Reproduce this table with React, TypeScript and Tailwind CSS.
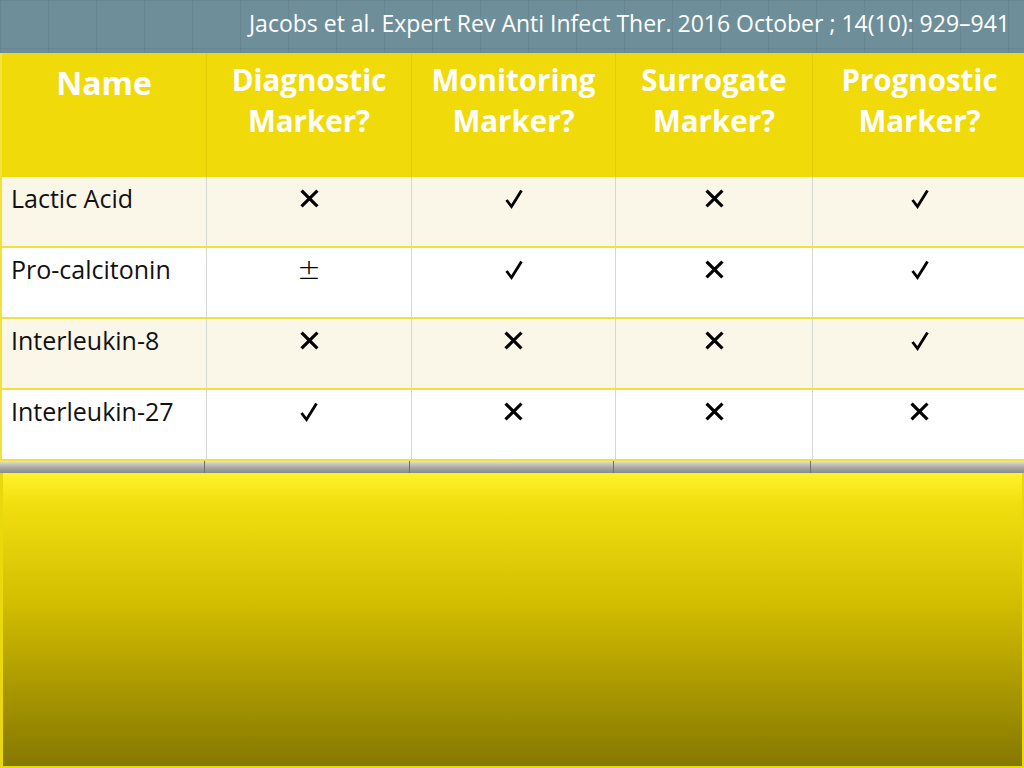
import React from "react";

type Mark = "x" | "v" | "pm";

const rows: { name: string; marks: Mark[] }[] = [
  { name: "Lactic Acid", marks: ["x", "v", "x", "v"] },
  { name: "Pro-calcitonin", marks: ["pm", "v", "x", "v"] },
  { name: "Interleukin-8", marks: ["x", "x", "x", "v"] },
  { name: "Interleukin-27", marks: ["v", "x", "x", "x"] },
];

const headers = ["Diagnostic", "Monitoring", "Surrogate", "Prognostic"];

function MarkGlyph({ m }: { m: Mark }) {
  if (m === "x")
    return (
      <svg width="19" height="19" viewBox="0 0 18 18" className="block">
        <path d="M2.5 2.5 L15.5 15.5 M15.5 2.5 L2.5 15.5" stroke="#000" strokeWidth="3" strokeLinecap="square" />
      </svg>
    );
  if (m === "v")
    return (
      <svg width="18" height="20" viewBox="0 0 18 20" className="block">
        <path d="M1.5 11 L6.5 17.5 L16.5 1.5" stroke="#000" strokeWidth="2.8" fill="none" strokeLinejoin="miter" />
      </svg>
    );
  return <span className="text-[28px] leading-[20px] text-black font-['DejaVu_Sans',sans-serif] font-light">±</span>;
}

const colW = ["w-[205px]", "w-[205px]", "w-[204px]", "w-[197px]", "w-[213px]"];

export default function App() {
  return (
    <div className="w-[1024px] h-[768px] overflow-hidden flex flex-col font-['Open_Sans','Lato',sans-serif]">
      <div className="h-[53px] shrink-0 bg-[#6e8f99] bg-[linear-gradient(to_right,rgba(40,60,70,0.10)_1px,transparent_1px),linear-gradient(to_bottom,rgba(40,60,70,0.10)_1px,transparent_1px)] bg-[size:48px_48px] flex items-center justify-end pr-[14px]">
        <span className="text-white text-[23px] leading-none -mt-[6px]">
          Jacobs et al. Expert Rev Anti Infect Ther. 2016 October ; 14(10): 929–941
        </span>
      </div>
      <div className="flex h-[124px] shrink-0 bg-[#f0da0a] border-l-2 border-[#f3e23a]">
        <div className={`${colW[0]} shrink-0 border-r border-[#e2cd06] flex justify-center pt-[9px]`}>
          <span className="text-white font-bold text-[32px] leading-[41px]">Name</span>
        </div>
        {headers.map((h, i) => (
          <div
            key={h}
            className={`${colW[i + 1]} shrink-0 ${i < 3 ? "border-r border-[#e2cd06]" : ""} flex flex-col items-center pt-[6px] text-white font-bold text-[29.5px] leading-[41px]`}
          >
            <span>{h}</span>
            <span>Marker?</span>
          </div>
        ))}
      </div>
      {rows.map((r, ri) => (
        <div
          key={r.name}
          className={`flex h-[71px] shrink-0 border-l-2 border-b-2 border-[#f0e13c] ${ri % 2 === 0 ? "bg-[#faf6e8]" : "bg-white"}`}
        >
          <div className={`${colW[0]} shrink-0 border-r border-[#d6d6d2] pl-[9px] pt-[5px] text-[25px] leading-[32px] text-[#111]`}>
            {r.name}
          </div>
          {r.marks.map((m, mi) => (
            <div
              key={mi}
              className={`${colW[mi + 1]} shrink-0 ${mi < 3 ? "border-r border-[#d6d6d2]" : ""} flex justify-center pt-[12px]`}
            >
              <MarkGlyph m={m} />
            </div>
          ))}
        </div>
      ))}
      <div className="h-[12px] shrink-0 flex bg-[linear-gradient(to_bottom,#e8e4c0,#c4c2b8_30%,#a4a4a0_60%,#8a8a86)]">
        <div className="w-[205px] shrink-0 border-r border-[#707070]" />
        <div className="w-[205px] shrink-0 border-r border-[#707070]" />
        <div className="w-[204px] shrink-0 border-r border-[#707070]" />
        <div className="w-[197px] shrink-0 border-r border-[#707070]" />
      </div>
      <div className="flex-1 bg-[linear-gradient(to_bottom,#fff22c,#f2df10_10%,#d2bd00_45%,#a89600_75%,#857800)] border-l-[3px] border-r-[2px] border-b-[2px] border-[#e8d80c]" />
    </div>
  );
}
